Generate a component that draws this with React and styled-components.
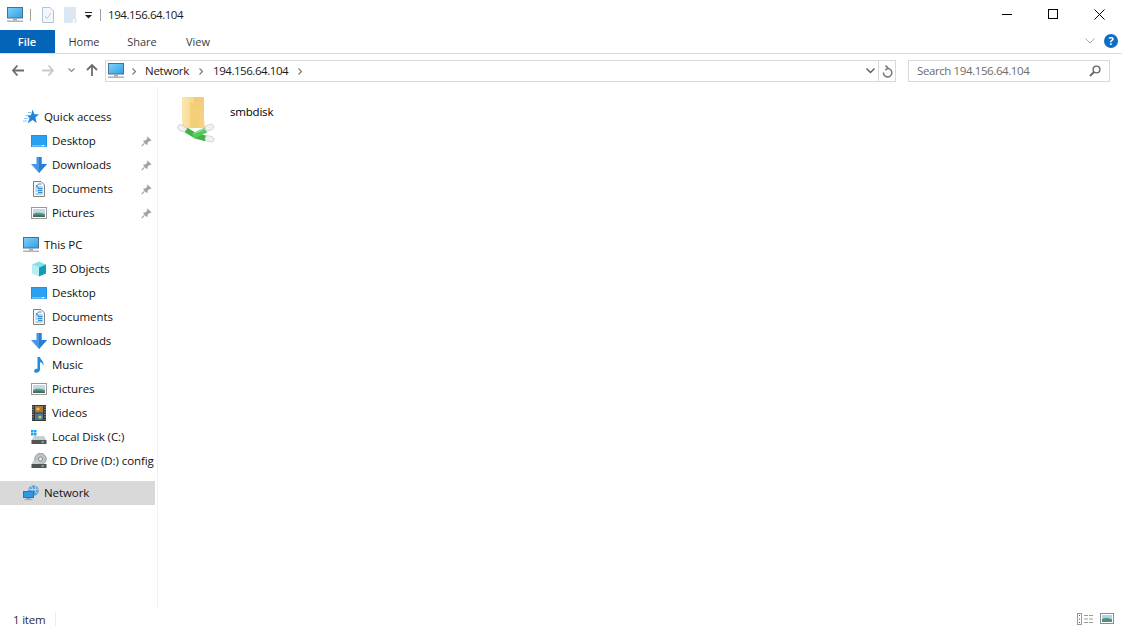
import React from "react";
import styled, { createGlobalStyle } from "styled-components";

const Global = createGlobalStyle`
  html, body { margin: 0; padding: 0; background: #fff; }
  body { font-family: "Open Sans", "Noto Sans", "Liberation Sans", sans-serif; font-size: 11.5px; color: #000; overflow: hidden; }
  * { box-sizing: border-box; }
`;

const Page = styled.div`
  width: 1122px; height: 630px; display: flex; flex-direction: column; background: #fff;
`;
const TitleBar = styled.div`
  height: 30px; display: flex; align-items: center; padding-left: 7px; flex: none;
`;
const QuickTools = styled.div`
  display: flex; align-items: center; height: 16px;
`;
const VRule = styled.span`
  width: 1px; height: ${p => p.$h || 12}px; background: ${p => p.$c || "#a0a0a0"}; margin: ${p => p.$m || "0"};
`;
const WindowTitle = styled.span`
  margin-left: 7px; padding-bottom: 2px; font-size: 11.5px; color: #1a1a1a; letter-spacing: -0.45px;
`;
const WindowButtons = styled.div`
  margin-left: auto; display: flex; height: 30px; padding-bottom: 2px;
`;
const WindowButton = styled.div`
  width: 46px; display: flex; align-items: center; justify-content: center;
`;
const TabRow = styled.div`
  height: 24px; display: flex; align-items: stretch; border-bottom: 1px solid #dadbdc; flex: none; padding-right: 4px;
`;
const FileTab = styled.div`
  width: 55px; height: 23px; background: #0364b8; color: #fff; display: flex; align-items: center; justify-content: center; font-weight: 600; font-size: 11px; padding-right: 1px;
`;
const Tab = styled.div`
  width: ${p => p.$w}px; display: flex; align-items: center; justify-content: center; font-size: 11px; color: #3b3b3b;
`;
const TabEnd = styled.div`
  margin-left: auto; display: flex; align-items: center; gap: 9px; padding-bottom: 1px;
`;
const NavBar = styled.div`
  height: 33px; display: flex; align-items: flex-start; padding-top: 6px; flex: none;
`;
const NavButtons = styled.div`
  width: 105px; height: 20px; display: flex; align-items: center; padding-left: 12px; flex: none;
`;
const Address = styled.div`
  width: 791px; height: 22px; border: 1px solid #d9d9d9; display: flex; align-items: center; padding-left: 2px; flex: none;
`;
const Crumb = styled.span`
  font-size: 11.5px; letter-spacing: ${p => p.$ls || "-0.25px"}; color: #1a1a1a; margin: ${p => p.$m}; padding-bottom: 2px;
`;
const AddressEnd = styled.div`
  margin-left: auto; display: flex; align-items: center; height: 20px;
`;
const Refresh = styled.div`
  width: 17px; height: 20px; border-left: 1px solid #d9d9d9; margin-left: 3px; display: flex; align-items: center; justify-content: center;
`;
const Search = styled.div`
  width: 202px; height: 22px; margin-left: 12px; border: 1px solid #d9d9d9; display: flex; align-items: center; padding: 0 8px; justify-content: space-between; flex: none;
`;
const SearchText = styled.span`
  color: #6d6d6d; font-size: 11.5px; letter-spacing: -0.4px; padding-bottom: 2px;
`;
const Body = styled.div`
  flex: 1; display: flex; min-height: 0;
`;
const Sidebar = styled.div`
  width: 158px; border-right: 1px solid #f0f0f0; padding-top: 18px; flex: none;
`;
const Row = styled.div`
  width: 155px; height: 24px; display: flex; align-items: center; overflow: hidden; white-space: nowrap; padding-left: ${p => (p.$top ? 23 : 31)}px; margin-bottom: ${p => p.$gap || 0}px; background: ${p => (p.$sel ? "#d9d9d9" : "transparent")}; color: #111;
`;
const RowIcon = styled.span`
  width: 16px; height: 16px; margin-right: 5px; flex: none; display: flex;
`;
const RowLabel = styled.span`
  font-size: 11.5px; letter-spacing: -0.08px; padding-bottom: 2px;
`;
const Pin = styled.span`
  margin-left: auto; margin-right: 3px; display: flex;
`;
const Content = styled.div`
  flex: 1; padding: 10px 0 0 19px;
`;
const Item = styled.div`
  display: flex; align-items: flex-start; gap: 13px;
`;
const ItemName = styled.span`
  font-size: 11.5px; letter-spacing: -0.2px; padding-top: 7px;
`;
const StatusBar = styled.div`
  height: 22px; flex: none; display: flex; align-items: center; padding: 0 8px 0 13px; font-size: 11.5px; color: #2b2b3b; letter-spacing: -0.2px;
`;
const StatusEnd = styled.div`
  margin-left: auto; display: flex; align-items: center; gap: 7px; padding-bottom: 1px;
`;

const Monitor = ({ s = 16 }) => (
  <svg width={s} height={s} viewBox="0 0 16 16">
    <defs><linearGradient id="mon" x1="0" y1="0" x2="1" y2="1"><stop offset="0" stopColor="#7fd3f7"/><stop offset="1" stopColor="#2f9fe8"/></linearGradient></defs>
    <rect x="0.5" y="0.5" width="15" height="10.5" fill="url(#mon)" stroke="#4e6f8a"/>
    <rect x="6" y="11.5" width="4" height="2" fill="#9aa8b2"/>
    <rect x="0" y="13.5" width="16" height="1.5" fill="#a9b4bc"/>
  </svg>
);
const Desktop = () => (
  <svg width="16" height="16" viewBox="0 0 16 16">
    <rect x="0" y="2" width="16" height="12" fill="#1e91ea"/>
    <rect x="1" y="3" width="14" height="9.6" fill="#2aa0f2"/>
    <rect x="1" y="12.6" width="14" height="0.7" fill="#e6f3fc"/>
    <rect x="11" y="12" width="2" height="1" fill="#fff"/>
  </svg>
);
const Download = () => (
  <svg width="16" height="16" viewBox="0 0 16 16">
    <path d="M5.5 0H10.5V7H16L8 16L0 7H5.5Z" fill="#4596e6"/>
    <path d="M8 0H10.5V7H16L8 16Z" fill="#2f7dd0"/>
  </svg>
);
const Doc = () => (
  <svg width="16" height="16" viewBox="0 0 16 16">
    <path d="M2.5 0.5H10L13.5 4V15.5H2.5Z" fill="#f6f6f6" stroke="#7f7f7f"/>
    <path d="M4.5 6H11.5M4.5 8H11.5M4.5 10H11.5M4.5 13H11.5" stroke="#9aa4ac" strokeWidth="1"/>
    <path d="M7.5 3H10M5 5L7.5 3.5M5 5L7.5 6.5M7 7.5H11.5M7 9.5H11.5M7 11.5H11.5" stroke="#1f8fd8" strokeWidth="1" fill="none"/>
  </svg>
);
const Picture = () => (
  <svg width="16" height="16" viewBox="0 0 16 16">
    <rect x="0.5" y="2.5" width="15" height="11" fill="#fff" stroke="#9a9a9a"/>
    <rect x="2" y="4" width="12" height="8" fill="#bcdcea"/>
    <path d="M2 9C5 7 9 7.5 14 9V12H2Z" fill="#5f8f7c"/>
    <path d="M2 10.5C6 9.5 10 10 14 11V12H2Z" fill="#3f6e5d"/>
  </svg>
);
const Star = () => (
  <svg width="16" height="16" viewBox="0 0 16 16">
    <path d="M9.5 0.5L11.4 5.3H16L12.4 8.6L13.8 14L9.6 11L4.6 14.5L6.6 9L3.5 6.2H8Z" fill="#2384dc"/>
    <path d="M1 9.5H5M0 12H4M2.5 6.5H5.5M5 3.5H8" stroke="#8cc4ee" strokeWidth="1"/>
  </svg>
);
const Cube = () => (
  <svg width="16" height="16" viewBox="0 0 16 16">
    <path d="M8 0.5L15 3.5L8 6.5L1 3.5Z" fill="#7fe3e8"/>
    <path d="M1 3.5L8 6.5V15.5L1 12.5Z" fill="#b8eef0"/>
    <path d="M15 3.5L8 6.5V15.5L15 12.5Z" fill="#0f9fb5"/>
  </svg>
);
const Music = () => (
  <svg width="16" height="16" viewBox="0 0 16 16">
    <path d="M6.5 0H9C9.3 3 13.5 4 12.5 9C12 6.5 10.5 5.5 9 5.3V12.5C9 14.5 7 16 4.8 15.8C3 15.6 2.6 14 3.6 12.8C4.6 11.7 5.6 11.5 6.5 11.8Z" fill="#1b8fe6"/>
  </svg>
);
const Film = () => (
  <svg width="16" height="16" viewBox="0 0 16 16">
    <rect x="1" y="0" width="14" height="16" fill="#3a3a3a"/>
    <rect x="4" y="1" width="8" height="6.5" fill="#a8793c"/>
    <rect x="4" y="8.5" width="8" height="6.5" fill="#3f79a8"/>
    <circle cx="7" cy="4" r="1.6" fill="#e8c33c"/><circle cx="9" cy="12" r="1.6" fill="#e8c33c"/>
    <path d="M2 1.5V14.5M14 1.5V14.5" stroke="#cfcfcf" strokeWidth="1" strokeDasharray="1 1.5"/>
  </svg>
);
const Disk = () => (
  <svg width="16" height="16" viewBox="0 0 16 16">
    <path d="M3 7H13L15.5 11.5H0.5Z" fill="#c9ced2"/>
    <rect x="0" y="1" width="2.5" height="2.5" fill="#1fa3ef"/><rect x="3" y="1" width="2.5" height="2.5" fill="#1fa3ef"/>
    <rect x="0" y="4" width="2.5" height="2.5" fill="#1fa3ef"/><rect x="3" y="4" width="2.5" height="2.5" fill="#1fa3ef"/>
    <rect x="0.5" y="11" width="15" height="4" fill="#4f5458"/>
    <rect x="10.5" y="12.3" width="2.5" height="1.4" fill="#6fe06f"/>
  </svg>
);
const Cd = () => (
  <svg width="16" height="16" viewBox="0 0 16 16">
    <circle cx="9.5" cy="6" r="5.7" fill="#bfc4c8" stroke="#999"/>
    <circle cx="9.5" cy="6" r="2" fill="#f1f1f1" stroke="#8a8a8a"/>
    <path d="M2.5 7.5H7L8 11H0.5Z" fill="#c9ced2"/>
    <rect x="0.5" y="11" width="15" height="4" fill="#4f5458"/>
    <rect x="10.5" y="12.3" width="2.5" height="1.4" fill="#6fe06f"/>
  </svg>
);
const Net = () => (
  <svg width="16" height="16" viewBox="0 0 16 16">
    <circle cx="10.5" cy="5.5" r="5.3" fill="#5f9fd2"/>
    <path d="M8 1C10 2.5 10 5 8 7M13 1C11.5 4 12 7 14.5 8.5M6 4C9 5 12 5 15.5 4" stroke="#bfe0f5" strokeWidth="1" fill="none"/>
    <rect x="0.5" y="6.5" width="10" height="6" fill="#2b9ae6" stroke="#3c6f96"/>
    <rect x="3.5" y="13" width="4" height="1" fill="#8aa0b0"/>
    <rect x="1.5" y="14" width="8" height="1.2" fill="#9fb0bc"/>
  </svg>
);
const PinIcon = () => (
  <svg width="11" height="11" viewBox="0 0 11 11">
    <path d="M6.5 0.5L10.5 4.5L9.5 5L8.5 4.7L6.6 6.6L6.6 8.6L5.8 9L2.2 5.2L2.6 4.4L4.6 4.4L6.4 2.5L6 1.5Z" fill="#9a9fa3"/>
    <path d="M3.5 7.2L0.7 10.2" stroke="#9a9fa3" strokeWidth="1.1"/>
  </svg>
);
const SharedFolder = () => (
  <svg width="40" height="47" viewBox="0 0 40 47">
    <defs>
      <linearGradient id="fo" x1="0" y1="0" x2="1" y2="0"><stop offset="0" stopColor="#fbe6ae"/><stop offset="1" stopColor="#f6d88a"/></linearGradient>
      <linearGradient id="bk" x1="0" y1="0" x2="1" y2="1"><stop offset="0" stopColor="#eec768"/><stop offset="1" stopColor="#f5d58a"/></linearGradient>
    </defs>
    <path d="M5 0H27V22L28 31H9L5 29Z" fill="url(#bk)"/>
    <path d="M5 0H17V7L13 5V32L5 28Z" fill="url(#fo)"/>
    <path d="M13 5L22 12V31H13Z" fill="#f3cf7a"/>
    <path d="M9 33L19 39L29 41.5" fill="none" stroke="#3fb24a" strokeWidth="5.5"/>
    <path d="M16 39L29 33" fill="none" stroke="#55c95a" strokeWidth="5.5"/>
    <path d="M17 36.5L28 31.5" fill="none" stroke="#9aeb96" strokeWidth="1.2"/>
    <rect x="0.5" y="28.5" width="9" height="5.5" rx="2.5" fill="#f0f0f0" stroke="#c5c5c5" strokeWidth="0.6" transform="rotate(28 5 31)"/>
    <rect x="28" y="28" width="9" height="5.5" rx="2.5" fill="#f0f0f0" stroke="#c5c5c5" strokeWidth="0.6" transform="rotate(-22 32 31)"/>
    <rect x="28" y="39" width="9" height="5.5" rx="2.5" fill="#f0f0f0" stroke="#c5c5c5" strokeWidth="0.6" transform="rotate(14 32 42)"/>
  </svg>
);
const DetailsView = () => (
  <svg width="16" height="12" viewBox="0 0 16 12">
    <rect x="0.5" y="0.5" width="4" height="11" fill="#fff" stroke="#9a9a9a"/>
    <rect x="2" y="2" width="1" height="1" fill="#555"/><rect x="2" y="5.5" width="1" height="1" fill="#555"/><rect x="2" y="9" width="1" height="1" fill="#a33"/>
    <path d="M7 2.5H11M12 2.5H16M7 6H11M12 6H16M7 9.5H11M12 9.5H16" stroke="#9a9a9a"/>
  </svg>
);
const LargeView = () => (
  <svg width="14" height="11" viewBox="0 0 14 11">
    <rect x="0.5" y="0.5" width="13" height="10" fill="#fff" stroke="#8c8c8c"/>
    <rect x="2" y="2" width="10" height="7" fill="#a8d6ea"/>
    <path d="M2 6C5 4.5 9 5 12 6.5V9H2Z" fill="#4f8f7c"/>
  </svg>
);

const quick = [["Desktop", Desktop], ["Downloads", Download], ["Documents", Doc], ["Pictures", Picture]];
const pc = [["3D Objects", Cube], ["Desktop", Desktop], ["Documents", Doc], ["Downloads", Download], ["Music", Music], ["Pictures", Picture], ["Videos", Film], ["Local Disk (C:)", Disk], ["CD Drive (D:) config", Cd]];

export default function App() {
  return (
    <Page>
      <Global />
      <TitleBar>
        <QuickTools>
          <Monitor />
          <VRule $m="0 0 0 7px" />
          <svg width="12" height="16" viewBox="0 0 12 16" style={{ marginLeft: 11 }}>
            <path d="M0.5 0.5H8L11.5 4V15.5H0.5Z" fill="#f3f6fb" stroke="#b5c3d6" />
            <path d="M3 9L5 11.5L9 6" stroke="#c3c9d0" fill="none" />
          </svg>
          <svg width="13" height="16" viewBox="0 0 13 16" style={{ marginLeft: 10 }}>
            <path d="M0 0H12V12H9V16H0Z" fill="#dde6f3" />
            <rect x="10" y="12" width="3" height="4" fill="#e9eff8" />
          </svg>
          <svg width="7" height="7" viewBox="0 0 7 7" style={{ marginLeft: 8 }}>
            <rect x="0" y="0" width="7" height="1" fill="#222" />
            <path d="M0 3H7L3.5 6.5Z" fill="#222" />
          </svg>
          <VRule $m="0 0 0 8px" />
        </QuickTools>
        <WindowTitle>194.156.64.104</WindowTitle>
        <WindowButtons>
          <WindowButton>
            <svg width="10" height="10" viewBox="0 0 10 10"><path d="M0 5.5H10" stroke="#000" /></svg>
          </WindowButton>
          <WindowButton>
            <svg width="10" height="10" viewBox="0 0 10 10"><rect x="0.5" y="0.5" width="9" height="9" fill="none" stroke="#000" /></svg>
          </WindowButton>
          <WindowButton>
            <svg width="11" height="11" viewBox="0 0 11 11"><path d="M0.5 0.5L10.5 10.5M10.5 0.5L0.5 10.5" stroke="#000" /></svg>
          </WindowButton>
        </WindowButtons>
      </TitleBar>
      <TabRow>
        <FileTab>File</FileTab>
        <Tab $w={58}>Home</Tab>
        <Tab $w={58}>Share</Tab>
        <Tab $w={54}>View</Tab>
        <TabEnd>
          <svg width="10" height="6" viewBox="0 0 10 6"><path d="M0.5 0.5L5 5L9.5 0.5" fill="none" stroke="#a9a9a9" /></svg>
          <svg width="14" height="14" viewBox="0 0 14 14">
            <circle cx="7" cy="7" r="7" fill="#0f6cc4" />
            <text x="7" y="11" textAnchor="middle" fontSize="11" fontWeight="700" fill="#fff" fontFamily="Open Sans, sans-serif">?</text>
          </svg>
        </TabEnd>
      </TabRow>
      <NavBar>
        <NavButtons>
          <svg width="12" height="11" viewBox="0 0 12 11"><path d="M5.5 0.5L1 5.5L5.5 10.5M1 5.5H12" fill="none" stroke="#6d6d6d" strokeWidth="1.8" /></svg>
          <svg width="12" height="11" viewBox="0 0 12 11" style={{ marginLeft: 18 }}><path d="M6.5 0.5L11 5.5L6.5 10.5M11 5.5H0" fill="none" stroke="#c9c9c9" strokeWidth="1.8" /></svg>
          <svg width="7" height="5" viewBox="0 0 7 5" style={{ marginLeft: 14 }}><path d="M0.5 0.5L3.5 3.5L6.5 0.5" fill="none" stroke="#8a8a8a" strokeWidth="1.2" /></svg>
          <svg width="12" height="12" viewBox="0 0 12 12" style={{ marginLeft: 11 }}><path d="M1 6L6 1L11 6M6 1V12" fill="none" stroke="#6d6d6d" strokeWidth="1.8" /></svg>
        </NavButtons>
        <Address>
          <Monitor />
          <svg width="5" height="7" viewBox="0 0 5 7" style={{ marginLeft: 8 }}><path d="M0.5 0.5L3.5 3.5L0.5 6.5" fill="none" stroke="#777" strokeWidth="1.1" /></svg>
          <Crumb $m="0 0 0 8px">Network</Crumb>
          <svg width="5" height="7" viewBox="0 0 5 7" style={{ marginLeft: 10 }}><path d="M0.5 0.5L3.5 3.5L0.5 6.5" fill="none" stroke="#777" strokeWidth="1.1" /></svg>
          <Crumb $m="0 0 0 9px" $ls="-0.45px">194.156.64.104</Crumb>
          <svg width="5" height="7" viewBox="0 0 5 7" style={{ marginLeft: 10 }}><path d="M0.5 0.5L3.5 3.5L0.5 6.5" fill="none" stroke="#777" strokeWidth="1.1" /></svg>
          <AddressEnd>
            <svg width="9" height="6" viewBox="0 0 9 6"><path d="M0.5 0.5L4.5 4.5L8.5 0.5" fill="none" stroke="#5a5a5a" strokeWidth="1.3" /></svg>
            <Refresh>
              <svg width="11" height="13" viewBox="0 0 11 13"><path d="M6 3.5A4.2 4.2 0 1 1 1.4 7.5M3.5 0.5L6 3.2L3.2 5.2" fill="none" stroke="#7a7a7a" strokeWidth="1.6" /></svg>
            </Refresh>
          </AddressEnd>
        </Address>
        <Search>
          <SearchText>Search 194.156.64.104</SearchText>
          <svg width="12" height="12" viewBox="0 0 12 12"><circle cx="7.5" cy="4.5" r="3.4" fill="none" stroke="#666" strokeWidth="1.4" /><path d="M5 7L1 11" stroke="#666" strokeWidth="1.8" /></svg>
        </Search>
      </NavBar>
      <Body>
        <Sidebar>
          <Row $top><RowIcon><Star /></RowIcon><RowLabel>Quick access</RowLabel></Row>
          {quick.map(([name, Icon], i) => (
            <Row key={name} $gap={i === 3 ? 8 : 0}>
              <RowIcon><Icon /></RowIcon><RowLabel>{name}</RowLabel>
              <Pin><PinIcon /></Pin>
            </Row>
          ))}
          <Row $top><RowIcon><Monitor /></RowIcon><RowLabel>This PC</RowLabel></Row>
          {pc.map(([name, Icon], i) => (
            <Row key={name} $gap={i === 8 ? 8 : 0}>
              <RowIcon><Icon /></RowIcon><RowLabel>{name}</RowLabel>
            </Row>
          ))}
          <Row $top $sel><RowIcon><Net /></RowIcon><RowLabel>Network</RowLabel></Row>
        </Sidebar>
        <Content>
          <Item>
            <SharedFolder />
            <ItemName>smbdisk</ItemName>
          </Item>
        </Content>
      </Body>
      <StatusBar>
        1 item
        <VRule $m="0 0 0 10px" $h={14} $c="#ececec" />
        <StatusEnd>
          <DetailsView />
          <LargeView />
        </StatusEnd>
      </StatusBar>
    </Page>
  );
}
